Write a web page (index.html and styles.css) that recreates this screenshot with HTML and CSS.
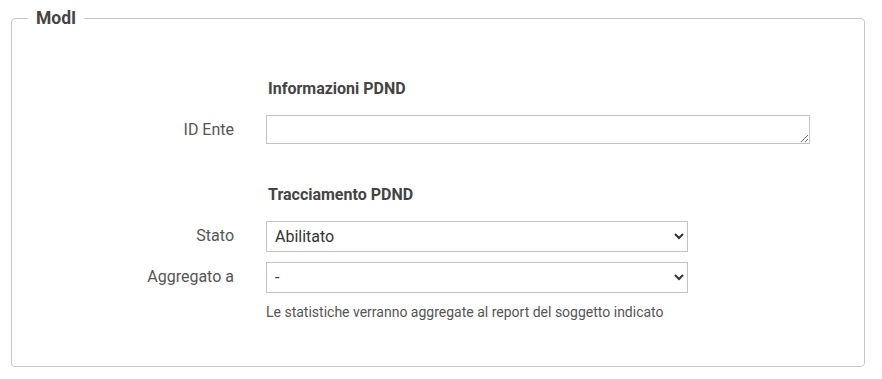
FILE: index.html
```html
<!DOCTYPE html>
<html>
<head>
<meta charset="utf-8">
<link rel="stylesheet" href="styles.css">
</head>
<body>
<div class="page">
  <fieldset class="box">
    <legend class="legend">ModI</legend>
    <div class="form">
      <div class="heading-row"><div></div><h3 class="heading">Informazioni PDND</h3></div>
      <div class="row">
        <label class="label">ID Ente</label>
        <div class="field"><textarea class="textarea"></textarea></div>
      </div>
      <div class="heading-row second"><div></div><h3 class="heading">Tracciamento PDND</h3></div>
      <div class="row">
        <label class="label">Stato</label>
        <div class="field"><select class="select"><option>Abilitato</option></select></div>
      </div>
      <div class="row">
        <label class="label">Aggregato a</label>
        <div class="field"><select class="select"><option>-</option></select>
          <p class="note">Le statistiche verranno aggregate al report del soggetto indicato</p></div>
      </div>
    </div>
  </fieldset>
</div>
</body>
</html>
```

FILE: styles.css
```css
* { box-sizing: border-box; }
html, body { margin: 0; padding: 0; background: #fff; }
body { font-family: Roboto, "Noto Sans", sans-serif; color: #333; }
.page { padding: 8px 17px 14px 11px; }
.box {
  margin: 0;
  border: 1px solid #c8c8c8;
  border-radius: 4px;
  padding: 0 0 45px 0;
  min-width: 0;
}
.legend {
  margin-left: 16px;
  padding: 0 8px;
  font-size: 17.5px;
  font-weight: 700;
  color: #444;
  line-height: 20px;
}
.form { display: flex; flex-direction: column; }
.heading-row, .row {
  display: grid;
  grid-template-columns: 222px 1fr;
  column-gap: 32px;
}
.heading-row { margin-top: 49px; height: 23px; }
.heading-row.second { margin-top: 39px; }
.heading {
  margin: 0;
  padding-left: 2px;
  font-size: 16px;
  font-weight: 700;
  color: #444;
  line-height: 23px;
}
.row { margin-top: 15px; }
.row + .row { margin-top: 10px; }
.label {
  text-align: right;
  font-size: 16px;
  color: #555;
  line-height: 19px;
  padding-top: 5px;
}
.field { display: flex; flex-direction: column; }
.textarea {
  width: 544px;
  height: 29px;
  border: 1px solid #c4c4c4;
  border-radius: 0;
  margin: 0;
  display: block;
  font-family: inherit;
}
.select {
  width: 422px;
  height: 31px;
  border: 1px solid #c4c4c4;
  border-radius: 0;
  background: #fff;
  font-family: inherit;
  font-size: 16px;
  color: #333;
  padding: 0 4px;
  margin: 0;
}
.note {
  margin: 11px 0 0 0;
  font-size: 14px;
  color: #555;
  line-height: 17px;
}
```
